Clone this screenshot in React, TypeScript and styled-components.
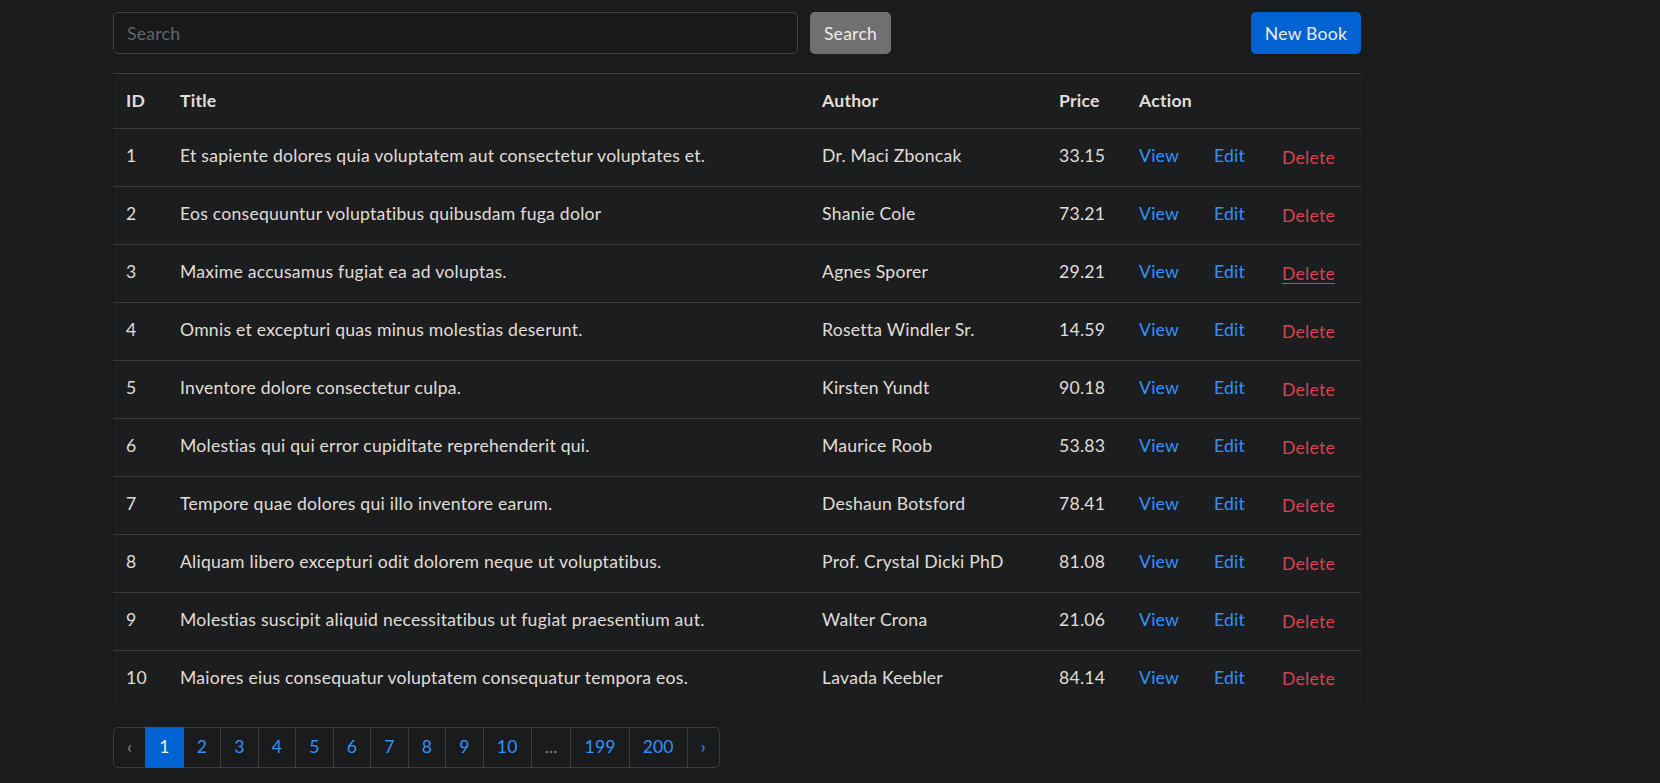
import React from "react";
import styled, { createGlobalStyle } from "styled-components";

const Global = createGlobalStyle`
  html, body { margin: 0; padding: 0; background: #1a1b1d; }
  body {
    font-family: Lato, "Noto Sans", "Liberation Sans", sans-serif;
    font-size: 17.6px;
    line-height: 26.4px;
    letter-spacing: 0.24px;
    color: #e1ddd8;
  }
  * { box-sizing: border-box; }
`;

const Page = styled.div`
  padding: 12px 0 0 113px;
  width: 1361px;
`;

const Toolbar = styled.div`
  display: flex;
  align-items: stretch;
  gap: 12px;
  height: 42px;
`;

const SearchInput = styled.input`
  width: 685px;
  height: 42px;
  padding: 0 13px;
  border: 1px solid #3e4245;
  border-radius: 5px;
  background: #18191b;
  color: #e1ddd8;
  font: inherit;
  letter-spacing: inherit;
  outline: none;
  &::placeholder { color: #62666a; }
`;

const Button = styled.button<{ $variant: "secondary" | "primary" }>`
  height: 42px;
  padding: 2px 0 0;
  border: none;
  border-radius: 5px;
  font: inherit;
  letter-spacing: inherit;
  white-space: nowrap;
  color: #ecebea;
  cursor: pointer;
  background: ${(p) => (p.$variant === "primary" ? "#0063d1" : "#707070")};
  margin-left: ${(p) => (p.$variant === "primary" ? "auto" : "0")};
  width: ${(p) => (p.$variant === "primary" ? "110px" : "81px")};
`;

const Table = styled.table`
  margin-top: 19px;
  width: 1248px;
  table-layout: fixed;
  border-collapse: separate;
  border-spacing: 0;
  background: #1c1d1f;
  border-top: 1px solid #393d40;
`;

const Th = styled.th`
  height: 55px;
  padding: 0 13px;
  text-align: left;
  font-weight: 700;
  border-bottom: 1px solid #393d40;
`;

const Td = styled.td`
  height: 58px;
  padding: 0 13px 2px;
  vertical-align: middle;
  border-bottom: 1px solid #393d40;
  white-space: nowrap;
  tr:last-child > & {
    border-bottom: none;
    height: 56px;
  }
`;

const Actions = styled.div`
  display: flex;
  align-items: center;
`;

const LinkA = styled.a<{ $w: number }>`
  width: ${(p) => p.$w}px;
  color: #3391ff;
  text-decoration: none;
  cursor: pointer;
`;

const DeleteBtn = styled.button<{ $hover?: boolean }>`
  padding: 3px 0 0;
  border: none;
  background: none;
  font: inherit;
  letter-spacing: inherit;
  color: #d9414e;
  cursor: pointer;
  text-decoration: ${(p) => (p.$hover ? "underline" : "none")};
  text-underline-offset: 3px;
`;

const Pagination = styled.ul`
  display: flex;
  list-style: none;
  margin: 20px 0 0;
  padding: 0;
`;

const PageItem = styled.li<{ $active?: boolean; $disabled?: boolean }>`
  height: 41px;
  display: flex;
  align-items: center;
  justify-content: center;
  padding: 0 13.1px;
  border: 1px solid #393d40;
  margin-left: -1px;
  background: ${(p) => (p.$active ? "#0063d1" : "#1a1b1d")};
  border-color: ${(p) => (p.$active ? "#0063d1" : "#393d40")};
  color: ${(p) => (p.$active ? "#f0efee" : p.$disabled ? "#8c877f" : "#3391ff")};
  position: ${(p) => (p.$active ? "relative" : "static")};
  letter-spacing: 0.1px;
  cursor: pointer;
  &:first-child {
    margin-left: 0;
    border-radius: 5px 0 0 5px;
  }
  &:last-child {
    border-radius: 0 5px 5px 0;
  }
`;

const books = [
  [1, "Et sapiente dolores quia voluptatem aut consectetur voluptates et.", "Dr. Maci Zboncak", "33.15"],
  [2, "Eos consequuntur voluptatibus quibusdam fuga dolor", "Shanie Cole", "73.21"],
  [3, "Maxime accusamus fugiat ea ad voluptas.", "Agnes Sporer", "29.21"],
  [4, "Omnis et excepturi quas minus molestias deserunt.", "Rosetta Windler Sr.", "14.59"],
  [5, "Inventore dolore consectetur culpa.", "Kirsten Yundt", "90.18"],
  [6, "Molestias qui qui error cupiditate reprehenderit qui.", "Maurice Roob", "53.83"],
  [7, "Tempore quae dolores qui illo inventore earum.", "Deshaun Botsford", "78.41"],
  [8, "Aliquam libero excepturi odit dolorem neque ut voluptatibus.", "Prof. Crystal Dicki PhD", "81.08"],
  [9, "Molestias suscipit aliquid necessitatibus ut fugiat praesentium aut.", "Walter Crona", "21.06"],
  [10, "Maiores eius consequatur voluptatem consequatur tempora eos.", "Lavada Keebler", "84.14"],
] as const;

const pages: { label: string; active?: boolean; disabled?: boolean }[] = [
  { label: "‹", disabled: true },
  { label: "1", active: true },
  ...["2", "3", "4", "5", "6", "7", "8", "9", "10"].map((l) => ({ label: l })),
  { label: "...", disabled: true },
  { label: "199" },
  { label: "200" },
  { label: "›" },
];

export default function App() {
  return (
    <>
      <Global />
      <Page>
        <Toolbar>
          <SearchInput placeholder="Search" />
          <Button $variant="secondary">Search</Button>
          <Button $variant="primary">New Book</Button>
        </Toolbar>
        <Table>
          <colgroup>
            <col style={{ width: 54 }} />
            <col style={{ width: 642 }} />
            <col style={{ width: 237 }} />
            <col style={{ width: 80 }} />
            <col style={{ width: 235 }} />
          </colgroup>
          <thead>
            <tr>
              <Th>ID</Th>
              <Th>Title</Th>
              <Th>Author</Th>
              <Th>Price</Th>
              <Th>Action</Th>
            </tr>
          </thead>
          <tbody>
            {books.map(([id, title, author, price]) => (
              <tr key={id}>
                <Td>{id}</Td>
                <Td>{title}</Td>
                <Td>{author}</Td>
                <Td>{price}</Td>
                <Td>
                  <Actions>
                    <LinkA $w={75}>View</LinkA>
                    <LinkA $w={68}>Edit</LinkA>
                    <DeleteBtn $hover={id === 3}>Delete</DeleteBtn>
                  </Actions>
                </Td>
              </tr>
            ))}
          </tbody>
        </Table>
        <Pagination>
          {pages.map((p, i) => (
            <PageItem key={i} $active={p.active} $disabled={p.disabled}>
              {p.label}
            </PageItem>
          ))}
        </Pagination>
      </Page>
    </>
  );
}
